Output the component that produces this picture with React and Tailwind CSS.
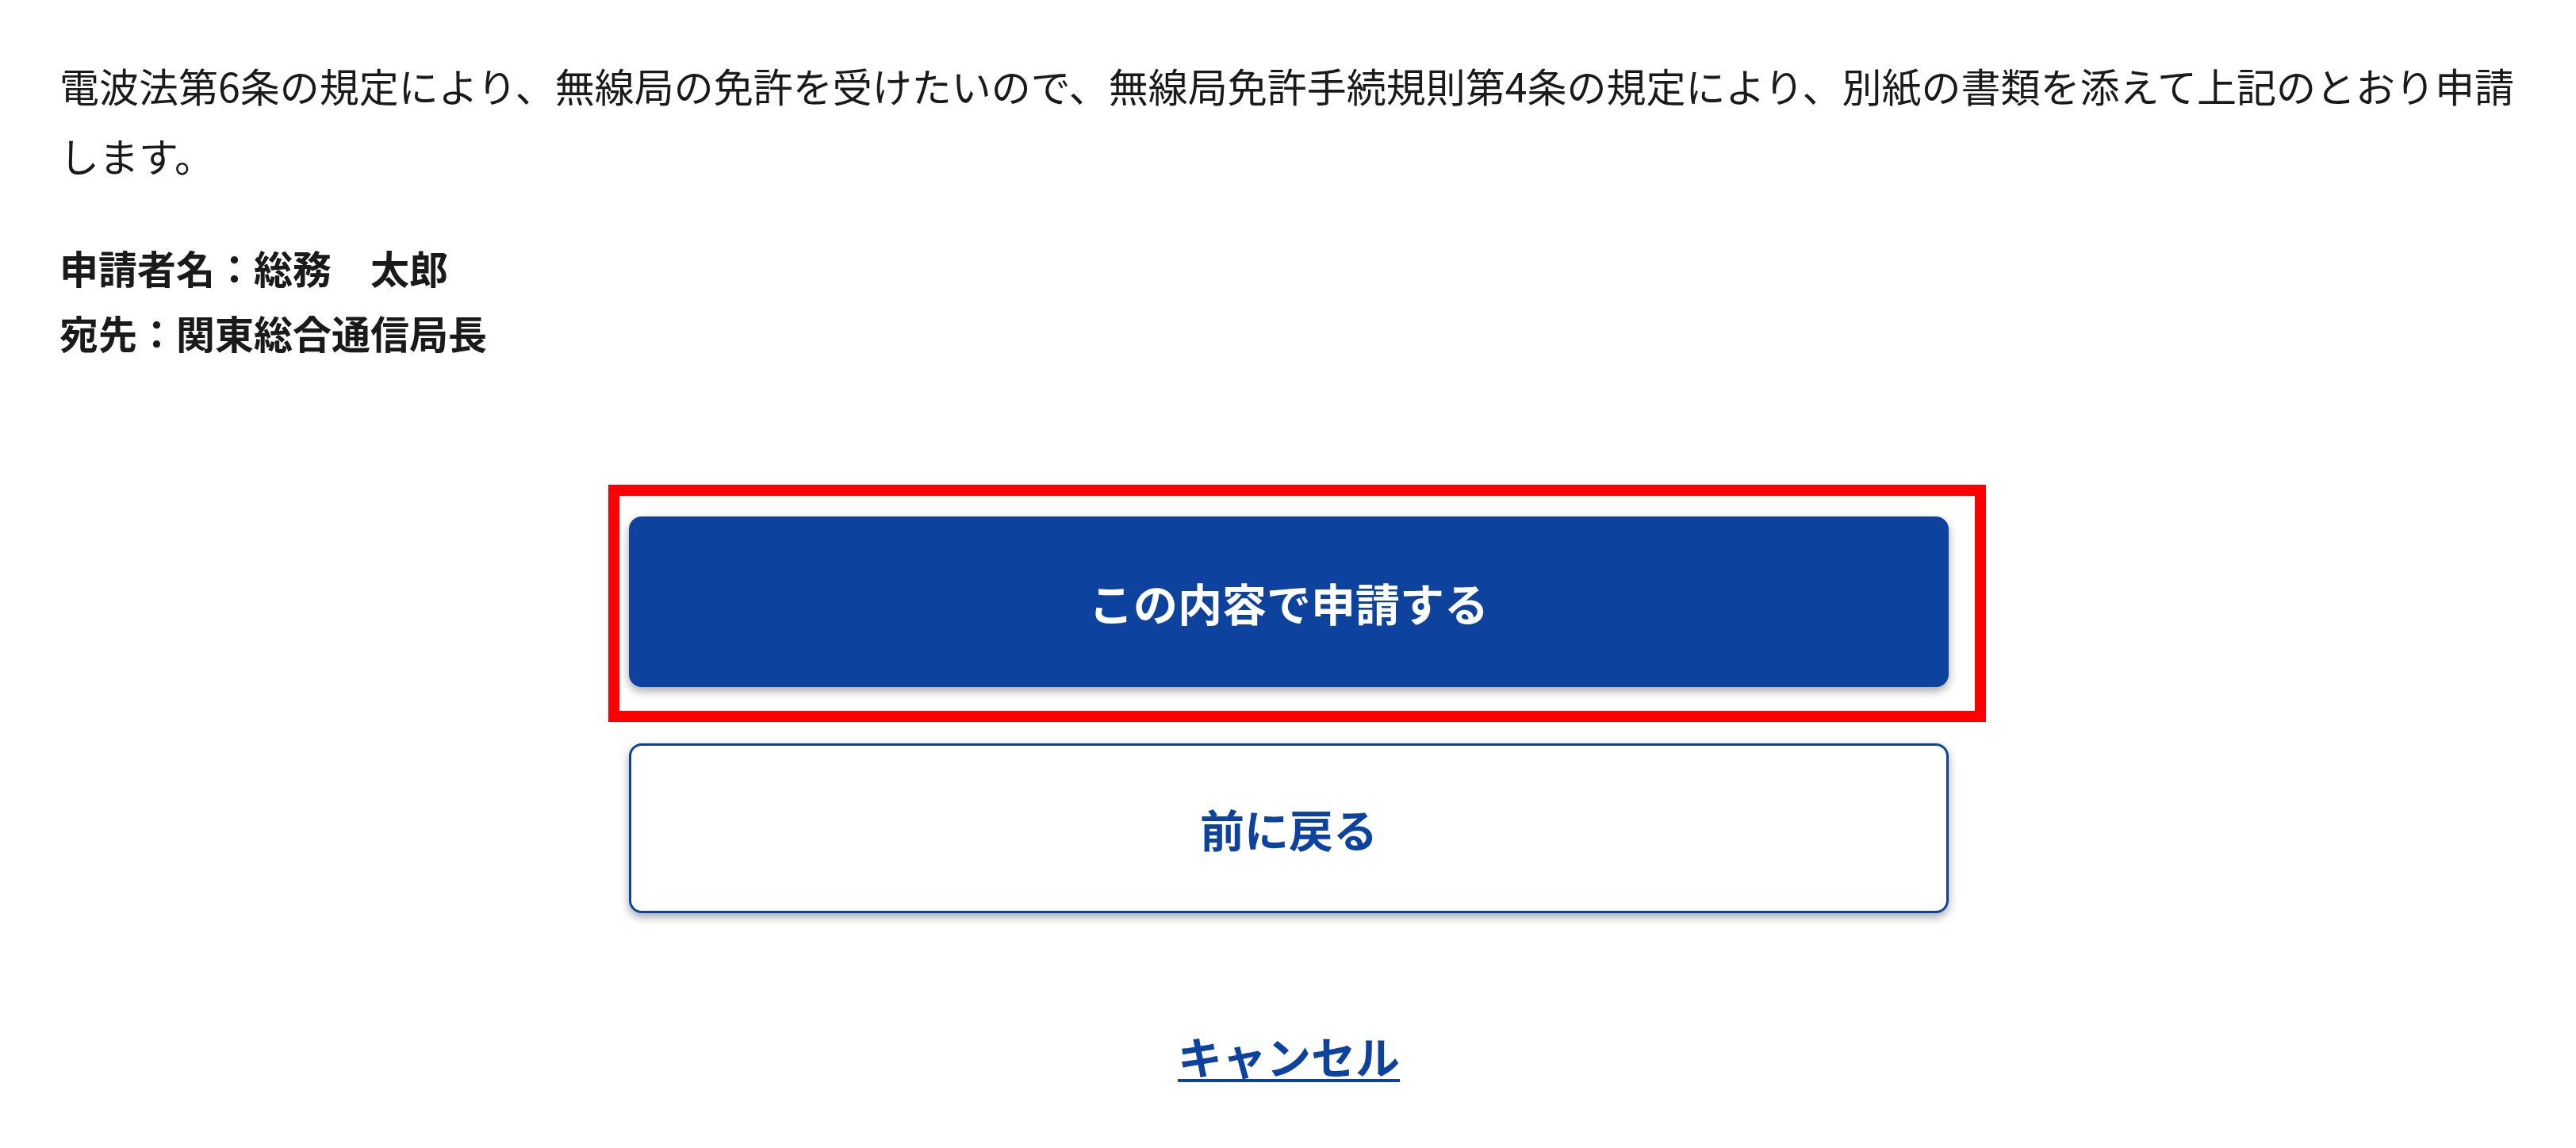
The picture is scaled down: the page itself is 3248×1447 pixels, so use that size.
import React from "react";

function ConfirmPage() {
  return (
    <div className="min-h-screen bg-white font-['Noto_Sans_CJK_JP','Noto_Sans',sans-serif] text-[#1a1a1a]">
      <div className="pl-[75px] pr-[73px] pt-[63px] pb-[60px]">
        {/* 申請文 */}
        <p className="text-[50px] leading-[88px]">
          電波法第6条の規定により、無線局の免許を受けたいので、無線局免許手続規則第4条の規定により、別紙の書類を添えて上記のとおり申請します。
        </p>

        <div className="mt-[57px] text-[49px] leading-[82px] font-bold">
          <p>申請者名：総務　太郎</p>
          <p>宛先：関東総合通信局長</p>
        </div>

        <div className="mt-[191px] flex flex-col items-center">
          <div className="relative w-[1664px]">
            <button
              type="button"
              className="h-[215px] w-full rounded-[16px] bg-[#0d439f] text-[56px] font-bold text-white shadow-[0_5px_12px_rgba(0,0,0,0.35)]"
            >
              この内容で申請する
            </button>
            {/* highlight frame */}
            <div className="pointer-events-none absolute -left-[26px] -top-[40px] -right-[47px] -bottom-[44px] border-[14px] border-[#ff0000]" />
          </div>

          <button
            type="button"
            className="mt-[71px] h-[214px] w-[1664px] rounded-[16px] border-[3px] border-[#0d439f] bg-white text-[56px] font-bold text-[#0d439f] shadow-[0_5px_12px_rgba(0,0,0,0.35)]"
          >
            前に戻る
          </button>

          <a
            href="#"
            className="mt-[139px] text-[56px] leading-[80px] font-bold text-[#0d439f] underline decoration-[4px] underline-offset-[6px]"
          >
            キャンセル
          </a>
        </div>
      </div>
    </div>
  );
}

export default function App() {
  return <ConfirmPage />;
}
